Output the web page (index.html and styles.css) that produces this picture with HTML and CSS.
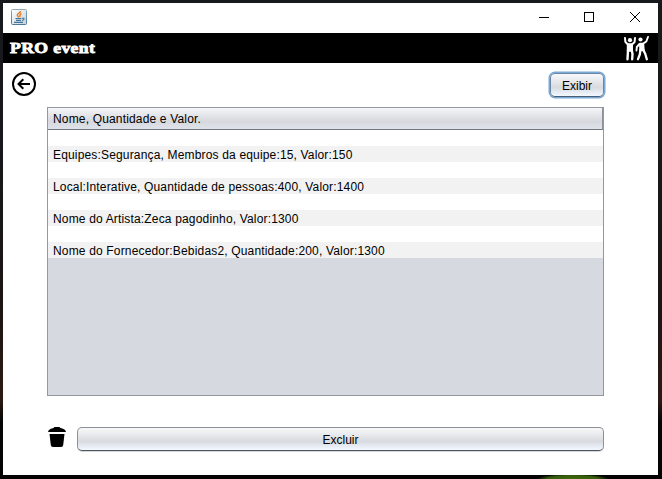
FILE: index.html
```html
<!DOCTYPE html>
<html lang="pt-BR">
<head>
<meta charset="utf-8">
<title>PRO event</title>
<link rel="stylesheet" href="styles.css">
</head>
<body>
<div class="window">
  <header class="titlebar">
    <svg class="java" width="16" height="16" viewBox="0 0 16 16">
      <defs><linearGradient id="jg" x1="0" y1="0" x2="0" y2="1"><stop offset="0" stop-color="#8fa9b9"/><stop offset="1" stop-color="#4c7899"/></linearGradient>
      <linearGradient id="jb" x1="0" y1="0" x2="1" y2="1"><stop offset="0" stop-color="#fff"/><stop offset="1" stop-color="#c3d1da"/></linearGradient></defs>
      <rect x=".5" y=".5" width="15" height="15" rx="1" fill="url(#jb)" stroke="url(#jg)"/>
      <path d="M9.500 2C9.500 4 6 4.500 6.300 6.200C6.500 7.200 7.500 7.500 7.500 8.400M10.500 4.500C8 5.500 9.500 6.500 8.700 8" fill="none" stroke="#e8791e" stroke-width="1.400"/>
      <path d="M4.500 9.500H10.500M5 11.400H10M3 13.400H12M11 9.300C14 8.800 13.500 11 11 11.500" fill="none" stroke="#42759b" stroke-width="1.100"/>
    </svg>
    <svg class="controls" width="104" height="12" viewBox="0 0 104 12" fill="none" stroke="#000">
      <path d="M0 6.500H10M45.500 1.500H54.500V10.500H45.500Z" shape-rendering="crispEdges"/>
      <path d="M91 1L101 11M101 1L91 11"/>
    </svg>
  </header>
  <div class="brand">
    <span class="name">PRO event</span>
    <svg class="people" width="26" height="25" viewBox="0 0 26 25" fill="none" stroke="#fff" stroke-linecap="round" stroke-linejoin="round">
      <circle cx="7" cy="4.200" r="2.100" fill="#fff" stroke="none"/>
      <circle cx="17.500" cy="3.500" r="2.100" fill="#fff" stroke="none"/>
      <path d="M2 2L2.400 6L5 8.500M12 2L11.600 6L9 8.500" stroke-width="2"/>
      <path d="M4.500 8H9.300L9.300 15H4.500Z" fill="#fff" stroke-width="1.400"/>
      <path d="M5 14L4.500 23.200M8.700 14L9.500 18L9.200 23.200" stroke-width="2.400"/>
      <path d="M25 1L23.300 5.500L19.500 8M16.500 8L13.800 11L13.500 14.500" stroke-width="1.900"/>
      <path d="M16.800 7.500L20.500 7.500L21 14.500H17Z" fill="#fff" stroke-width="1.400"/>
      <path d="M17.400 14L16.800 18.500L15 23.200M20.400 14L22.300 18L23.800 23.200" stroke-width="2.300"/>
    </svg>
  </div>
  <div class="toolbar">
    <svg class="back" width="24" height="24" viewBox="0 0 24 24" fill="none" stroke="#000" stroke-width="2">
      <circle cx="12" cy="12" r="11"/>
      <path d="M18 12H7M11.300 7.200L6.500 12L11.300 16.800"/>
    </svg>
    <button class="btn exibir">Exibir</button>
  </div>
  <div class="table">
    <div class="head">Nome, Quantidade e Valor.</div>
    <div class="row"></div>
    <div class="row"><span>Equipes:Segurança, Membros da equipe:15, Valor:150</span></div>
    <div class="row"></div>
    <div class="row"><span>Local:Interative, Quantidade de pessoas:400, Valor:1400</span></div>
    <div class="row"></div>
    <div class="row"><span>Nome do Artista:Zeca pagodinho, Valor:1300</span></div>
    <div class="row"></div>
    <div class="row"><span>Nome do Fornecedor:Bebidas2, Quantidade:200, Valor:1300</span></div>
  </div>
  <div class="actions">
    <svg class="trash" width="18" height="20" viewBox="0 0 18 20">
      <path d="M0 5C.5 2.500 3 1.300 5.500 1L6.500 0H11.500L12.500 1C15 1.300 17.500 2.500 18 5Z"/>
      <path d="M1.500 7H16.500L15.200 18C15 19.300 14.300 20 13 20H5C3.700 20 3 19.300 2.800 18Z"/>
    </svg>
    <button class="btn excluir">Excluir</button>
  </div>
</div>
</body>
</html>
```
FILE: styles.css
```css
* { box-sizing: border-box; }
body {
  margin: 0;
  width: 662px;
  height: 479px;
  overflow: hidden;
  padding: 3px 4px 4px 3px;
  background:
    radial-gradient(ellipse 36px 5px at 573px 479px, #40690f 0, #355c0c 70%, transparent 100%),
    linear-gradient(#18191d 0, #17181c 150px, #1b1412 300px, #2b1a13 400px, #050506 422px, #030304 100%);
  font: 12px/16px "Liberation Sans", Arial, sans-serif;
  color: #000;
}
.window { width: 655px; height: 472px; background: #fff; }
.titlebar {
  height: 30px;
  display: flex;
  justify-content: space-between;
  padding: 6px 15px 0 8px;
}
.controls { margin-top: 2px; }
.brand {
  height: 30px;
  display: flex;
  justify-content: space-between;
  padding: 3px 9px 0 7px;
  background: #000;
  color: #fff;
}
.name {
  font: 900 15px/24px "Liberation Serif", serif;
  letter-spacing: .3px;
  transform: scaleX(1.18);
  transform-origin: 0 50%;
  -webkit-text-stroke: .8px #fff;
}
.toolbar {
  height: 44px;
  display: flex;
  justify-content: space-between;
  padding: 9px 54px 0 9px;
}
.btn {
  height: 24px;
  padding: 2px 0 0;
  border: 1px solid #8d9097;
  border-bottom-color: #50555c;
  border-radius: 5px;
  background: linear-gradient(#f8f8fa 0, #e3e5e9 40%, #d7dade 60%, #e5e9f1 80%, #f4f8ff 100%);
  box-shadow: 0 1px 0 #d5d7da;
  font: 12px/19px "Liberation Sans", Arial, sans-serif;
  color: #000;
}
.exibir {
  width: 54px;
  margin-top: 1px;
  border-color: #6a87a8;
  border-bottom-color: #4a5d75;
  box-shadow: 0 0 0 1.500px #78a9d7;
}
.table {
  width: 557px;
  height: 289px;
  margin-left: 44px;
  border: 1px solid #9297a1;
  background: #d6d9e0;
  letter-spacing: .165px;
}
.head {
  height: 22px;
  padding: 3px 5px 0;
  border-right: 1px solid #8c919b;
  border-bottom: 1px solid #6f747d;
  background: linear-gradient(#f6f6f8 0, #e3e5e9 35%, #d6d8dd 65%, #dfe3ea 100%);
}
.row { height: 16px; padding-left: 5px; background: #fff; line-height: 18px; white-space: nowrap; }
.row:nth-child(odd) { background: #f2f2f2; }
.actions {
  display: flex;
  gap: 11px;
  margin-top: 31px;
  padding-left: 45px;
}
.excluir { width: 527px; }
```
